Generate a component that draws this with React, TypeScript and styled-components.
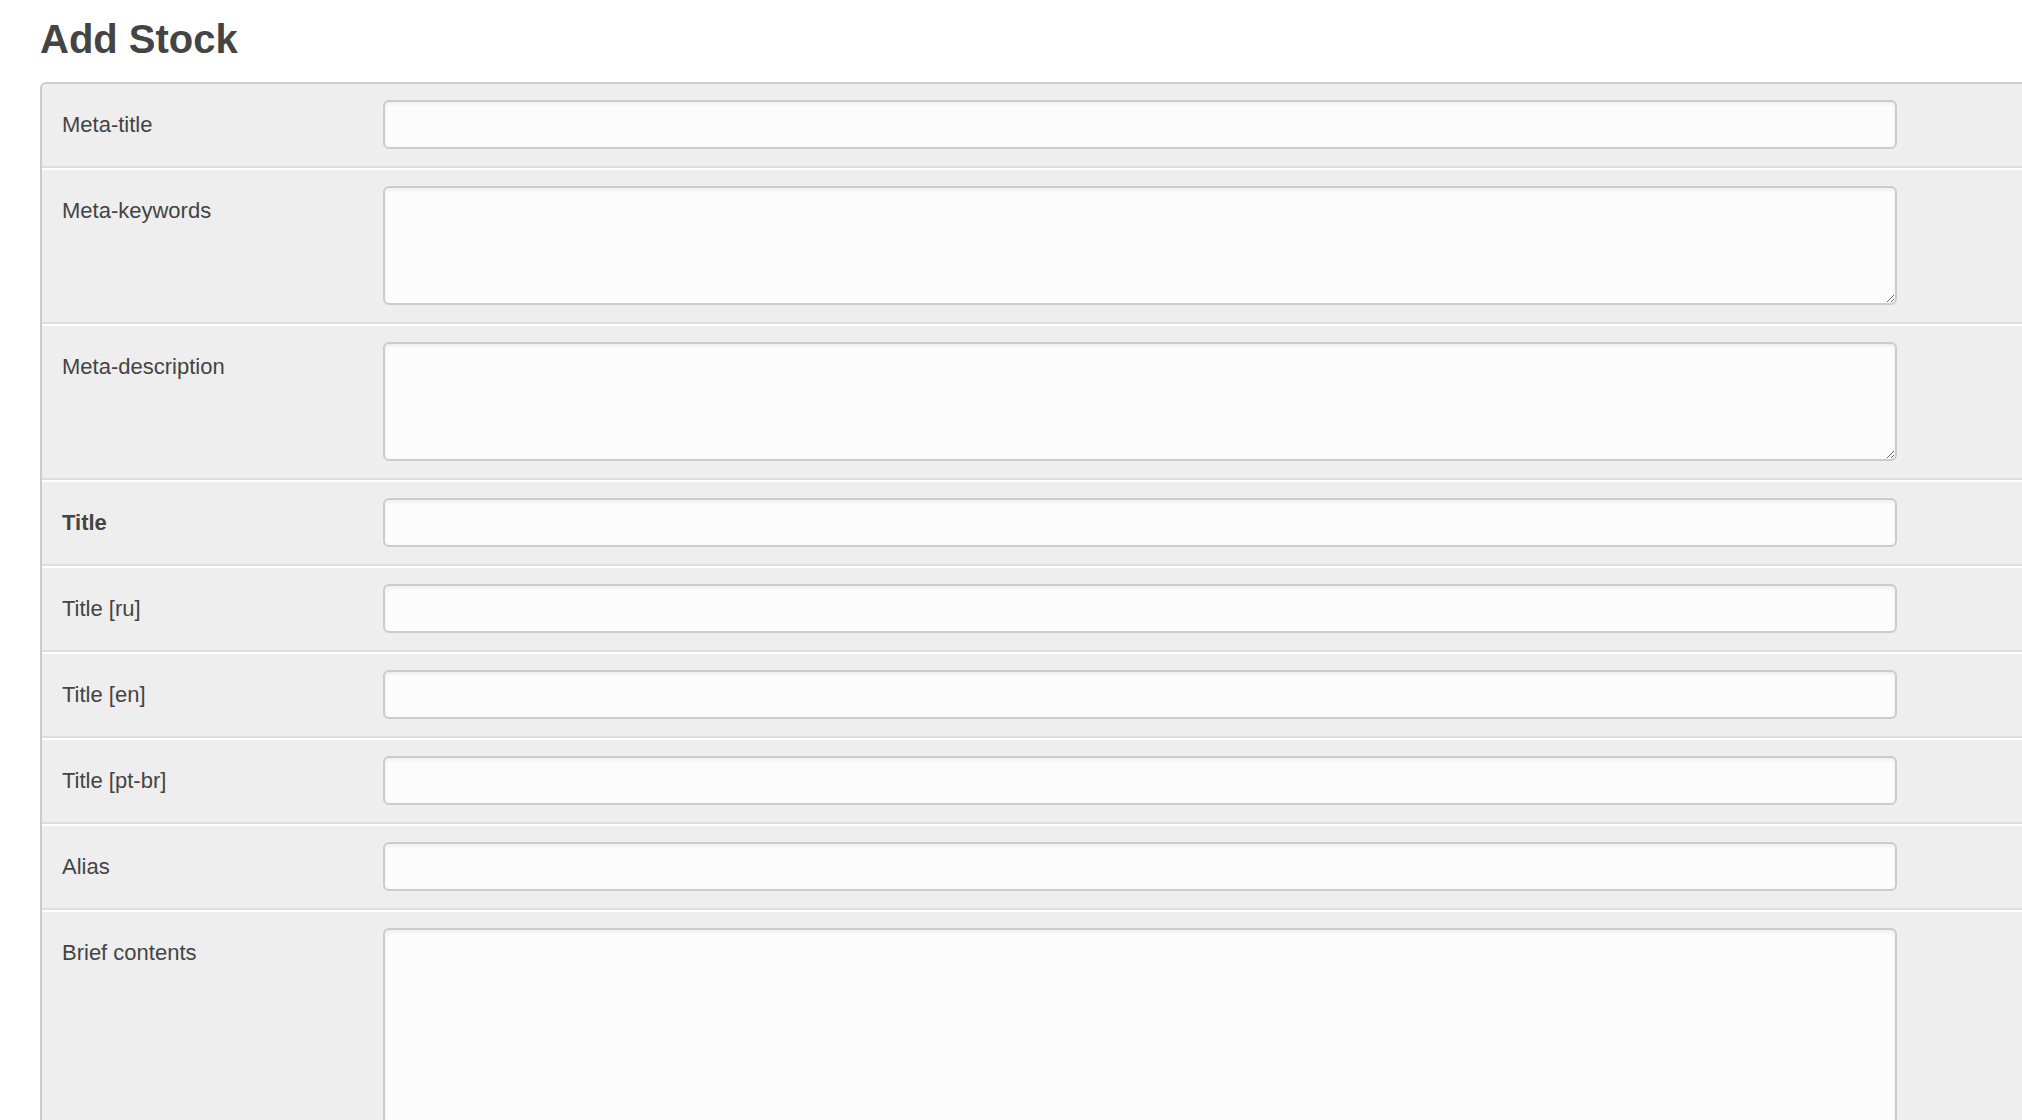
import styled, { createGlobalStyle } from "styled-components";

const GlobalStyle = createGlobalStyle`
    html, body {
        margin: 0;
        padding: 0;
        background: #ffffff;
        overflow-x: hidden;
    }
    body {
        font-family: "Liberation Sans", Arial, sans-serif;
        color: #444444;
    }
`;

type Field = {
    label: string;
    kind: "input" | "textarea";
    rows?: number;
    required?: boolean;
};

const fields: Field[] = [
    { label: "Meta-title", kind: "input" },
    { label: "Meta-keywords", kind: "textarea", rows: 119 },
    { label: "Meta-description", kind: "textarea", rows: 119 },
    { label: "Title", kind: "input", required: true },
    { label: "Title [ru]", kind: "input" },
    { label: "Title [en]", kind: "input" },
    { label: "Title [pt-br]", kind: "input" },
    { label: "Alias", kind: "input" },
    { label: "Brief contents", kind: "textarea", rows: 320 },
];

export default function App() {
    return (
        <Page>
            <GlobalStyle />
            <Heading>Add Stock</Heading>
            <Panel>
                {fields.map((field) => (
                    <Row key={field.label}>
                        <Label bold={field.required}>{field.label}</Label>
                        {field.kind === "input" ? (
                            <TextInput type="text" />
                        ) : (
                            <TextArea boxheight={field.rows ?? 119} />
                        )}
                    </Row>
                ))}
            </Panel>
        </Page>
    );
}

const Page = styled.div`
    padding: 17px 0 0 40px;
    box-sizing: border-box;
    width: 100%;
    height: 1120px;
    overflow: hidden;
`;

const Heading = styled.h1`
    margin: 0 0 21px;
    font-size: 40px;
    line-height: 44px;
    font-weight: bold;
    color: #444444;
`;

const Panel = styled.div`
    width: calc(100% + 40px);
    background: #eeeeee;
    border: 2px solid #cccccc;
    border-radius: 6px;
`;

const Row = styled.div`
    display: flex;
    align-items: flex-start;
    padding: 16px 0 17px;
    border-top: 2px solid #ffffff;
    border-bottom: 2px solid #dddddd;

    &:first-child {
        border-top: none;
    }
`;

const Label = styled.label<{ bold?: boolean }>`
    flex: 0 0 341px;
    box-sizing: border-box;
    padding-left: 20px;
    font-size: 22px;
    line-height: 49px;
    font-weight: ${({ bold }) => (bold ? "bold" : "normal")};
    color: #444444;
`;

const TextInput = styled.input`
    width: 1514px;
    height: 49px;
    box-sizing: border-box;
    padding: 6px 12px;
    border: 2px solid #cccccc;
    border-radius: 6px;
    background: #fcfcfc;
    box-shadow: inset 0 2px 4px rgba(0, 0, 0, 0.06);
    font-family: "Liberation Sans", Arial, sans-serif;
    font-size: 22px;
    color: #444444;
    outline: none;
`;

const TextArea = styled.textarea<{ boxheight: number }>`
    width: 1514px;
    height: ${({ boxheight }) => boxheight}px;
    box-sizing: border-box;
    padding: 6px 12px;
    border: 2px solid #cccccc;
    border-radius: 6px;
    background: #fcfcfc;
    box-shadow: inset 0 2px 4px rgba(0, 0, 0, 0.06);
    font-family: "Liberation Sans", Arial, sans-serif;
    font-size: 22px;
    color: #444444;
    outline: none;
    display: block;
`;
